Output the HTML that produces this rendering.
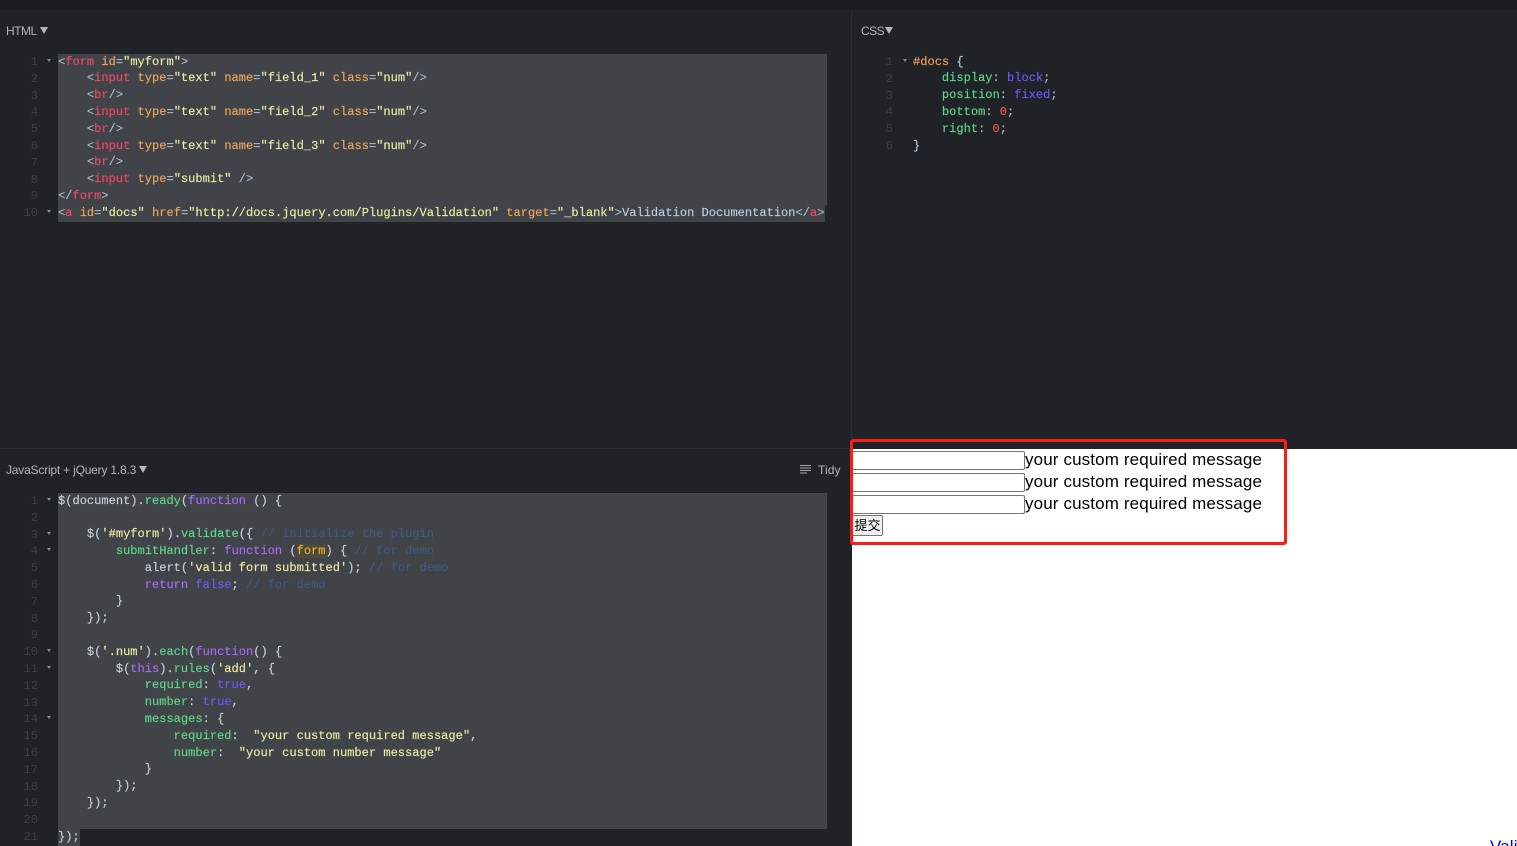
<!DOCTYPE html>
<html><head><meta charset="utf-8">
<style>
html,body{margin:0;padding:0;width:1517px;height:846px;overflow:hidden;background:#1f2227}
body{position:relative}
.a{position:absolute}
.code,.gut{position:absolute;font:12.06px/16.8px "Liberation Mono",monospace;white-space:pre;color:#c6d2de}
.code{-webkit-text-stroke:.15px}
.gut{text-align:right;color:#3c4047;width:40px}
.lab{position:absolute;font:12px/16px "Liberation Sans",sans-serif;color:#b4b6b8;letter-spacing:-.2px;white-space:pre}
.sel{position:absolute;background:#404348}
.tri{position:absolute;width:0;height:0;border-left:2.5px solid transparent;border-right:2.5px solid transparent;border-top:3px solid #8a8d92}
.t{color:#f04a60}.b{color:#a9bacc}.n{color:#f0a65c}.s{color:#ececa4}.x{color:#b8cce4}
.m{color:#5fd888}.k{color:#a86cf5}.v{color:#6a5cf8}.c{color:#43597c}.o{color:#f0a050}.r{color:#ec5a4a}.p{color:#f8ac1f;background:#4a4a40}
.msg{position:absolute;left:1025px;font:17px/22px "Liberation Sans",sans-serif;color:#000;white-space:pre;letter-spacing:.13px}
.inp{position:absolute;left:852px;width:171px;height:17px;border:1px solid #767676;border-radius:2px;background:#fff}
</style></head>
<body>
<div class="a" style="left:0;top:0;width:1517px;height:10px;background:#1a1d22"></div>
<div class="a" style="left:851px;top:10px;width:1px;height:439px;background:#2a2d32"></div>
<div class="a" style="left:0;top:448px;width:851px;height:1px;background:#2a2d32"></div>

<div class="lab" style="left:6px;top:23px;letter-spacing:-.5px">HTML</div>
<div class="a" style="left:40px;top:27px;width:0;height:0;border-left:4px solid transparent;border-right:4px solid transparent;border-top:7px solid #b4b6b8"></div>
<div class="lab" style="left:861px;top:23px;letter-spacing:-.5px">CSS</div>
<div class="a" style="left:885px;top:27px;width:0;height:0;border-left:4px solid transparent;border-right:4px solid transparent;border-top:7px solid #b4b6b8"></div>
<div class="lab" style="left:6px;top:462px">JavaScript + jQuery 1.8.3</div>
<div class="a" style="left:139px;top:466px;width:0;height:0;border-left:4px solid transparent;border-right:4px solid transparent;border-top:7px solid #b4b6b8"></div>
<svg class="a" style="left:800px;top:465px" width="12" height="9" viewBox="0 0 12 9"><path d="M0 .5H11M0 3H11M0 5.5H11M0 8H7" stroke="#a8aaac" stroke-width="1" fill="none"/></svg>
<div class="lab" style="left:818px;top:462px;letter-spacing:.1px">Tidy</div>

<!-- selections -->
<div class="sel" style="left:58px;top:54px;width:769px;height:151px"></div>
<div class="sel" style="left:58px;top:205px;width:767px;height:17px"></div>
<div class="sel" style="left:58px;top:493px;width:769px;height:336px"></div>
<div class="sel" style="left:58px;top:829px;width:22px;height:17px"></div>

<!-- HTML gutter -->
<div class="gut" style="left:-2px;top:54px">1
2
3
4
5
6
7
8
9
10</div>
<div class="tri" style="left:47px;top:59px"></div>
<div class="tri" style="left:47px;top:210px"></div>

<div class="code" style="left:58px;top:53.6px"><span class="b">&lt;</span><span class="t">form</span> <span class="n">id</span><span class="b">=</span><span class="s">"myform"</span><span class="b">&gt;</span>
    <span class="b">&lt;</span><span class="t">input</span> <span class="n">type</span><span class="b">=</span><span class="s">"text"</span> <span class="n">name</span><span class="b">=</span><span class="s">"field_1"</span> <span class="n">class</span><span class="b">=</span><span class="s">"num"</span><span class="b">/&gt;</span>
    <span class="b">&lt;</span><span class="t">br</span><span class="b">/&gt;</span>
    <span class="b">&lt;</span><span class="t">input</span> <span class="n">type</span><span class="b">=</span><span class="s">"text"</span> <span class="n">name</span><span class="b">=</span><span class="s">"field_2"</span> <span class="n">class</span><span class="b">=</span><span class="s">"num"</span><span class="b">/&gt;</span>
    <span class="b">&lt;</span><span class="t">br</span><span class="b">/&gt;</span>
    <span class="b">&lt;</span><span class="t">input</span> <span class="n">type</span><span class="b">=</span><span class="s">"text"</span> <span class="n">name</span><span class="b">=</span><span class="s">"field_3"</span> <span class="n">class</span><span class="b">=</span><span class="s">"num"</span><span class="b">/&gt;</span>
    <span class="b">&lt;</span><span class="t">br</span><span class="b">/&gt;</span>
    <span class="b">&lt;</span><span class="t">input</span> <span class="n">type</span><span class="b">=</span><span class="s">"submit"</span> <span class="b">/&gt;</span>
<span class="b">&lt;/</span><span class="t">form</span><span class="b">&gt;</span>
<span class="b">&lt;</span><span class="t">a</span> <span class="n">id</span><span class="b">=</span><span class="s">"docs"</span> <span class="n">href</span><span class="b">=</span><span class="s">"http://docs.jquery.com/Plugins/Validation"</span> <span class="n">target</span><span class="b">=</span><span class="s">"_blank"</span><span class="b">&gt;</span><span class="x">Validation Documentation</span><span class="b">&lt;/</span><span class="t">a</span><span class="b">&gt;</span></div>

<!-- CSS -->
<div class="gut" style="left:853px;top:54px">1
2
3
4
5
6</div>
<div class="tri" style="left:903px;top:59px"></div>
<div class="code" style="left:913px;top:53.6px"><span class="o">#docs</span> <span class="x">{</span>
    <span class="m">display</span><span class="b">:</span> <span class="v">block</span><span class="b">;</span>
    <span class="m">position</span><span class="b">:</span> <span class="v">fixed</span><span class="b">;</span>
    <span class="m">bottom</span><span class="b">:</span> <span class="r">0</span><span class="b">;</span>
    <span class="m">right</span><span class="b">:</span> <span class="r">0</span><span class="b">;</span>
<span class="x">}</span></div>

<!-- JS gutter -->
<div class="gut" style="left:-2px;top:493px">1
2
3
4
5
6
7
8
9
10
11
12
13
14
15
16
17
18
19
20
21</div>
<div class="tri" style="left:47px;top:498px"></div>
<div class="tri" style="left:47px;top:532px"></div>
<div class="tri" style="left:47px;top:548px"></div>
<div class="tri" style="left:47px;top:649px"></div>
<div class="tri" style="left:47px;top:666px"></div>
<div class="tri" style="left:47px;top:716px"></div>

<div class="code" style="left:58px;top:492.6px">$(document).<span class="m">ready</span>(<span class="k">function</span> () {

    $(<span class="s">'#myform'</span>).<span class="m">validate</span>({ <span class="c">// initialize the plugin</span>
        <span class="m">submitHandler</span>: <span class="k">function</span> (<span class="p">form</span>) { <span class="c">// for demo</span>
            alert(<span class="s">'valid form submitted'</span>); <span class="c">// for demo</span>
            <span class="k">return</span> <span class="v">false</span>; <span class="c">// for demo</span>
        }
    });

    $(<span class="s">'.num'</span>).<span class="m">each</span>(<span class="k">function</span>() {
        $(<span class="k">this</span>).<span class="m">rules</span>(<span class="s">'add'</span>, {
            <span class="m">required</span>: <span class="v">true</span>,
            <span class="m">number</span>: <span class="v">true</span>,
            <span class="m">messages</span>: {
                <span class="m">required</span>:  <span class="s">"your custom required message"</span>,
                <span class="m">number</span>:  <span class="s">"your custom number message"</span>
            }
        });
    });

});</div>

<!-- Result -->
<div class="a" style="left:852px;top:449px;width:665px;height:397px;background:#fff;overflow:hidden">
  <div class="a" style="left:638px;top:388px;font:17px/20px 'Liberation Sans',sans-serif;color:#0000ee;white-space:pre;letter-spacing:.13px">Validation Documentation</div>
</div>
<div class="inp" style="top:451px"></div>
<div class="inp" style="top:473px"></div>
<div class="inp" style="top:495px"></div>
<div class="msg" style="top:449px">your custom required message</div>
<div class="msg" style="top:471px">your custom required message</div>
<div class="msg" style="top:493px">your custom required message</div>
<div class="a" style="left:852px;top:515px;width:29px;height:19px;border:1px solid #767676;border-radius:2px;background:#efefef;font:13px/19px 'Liberation Sans','Noto Sans CJK SC',sans-serif;text-align:center;color:#000">提交</div>
<div class="a" style="left:850px;top:439px;width:431px;height:100px;border:3px solid #fa1e14;border-radius:3px"></div>
</body></html>
